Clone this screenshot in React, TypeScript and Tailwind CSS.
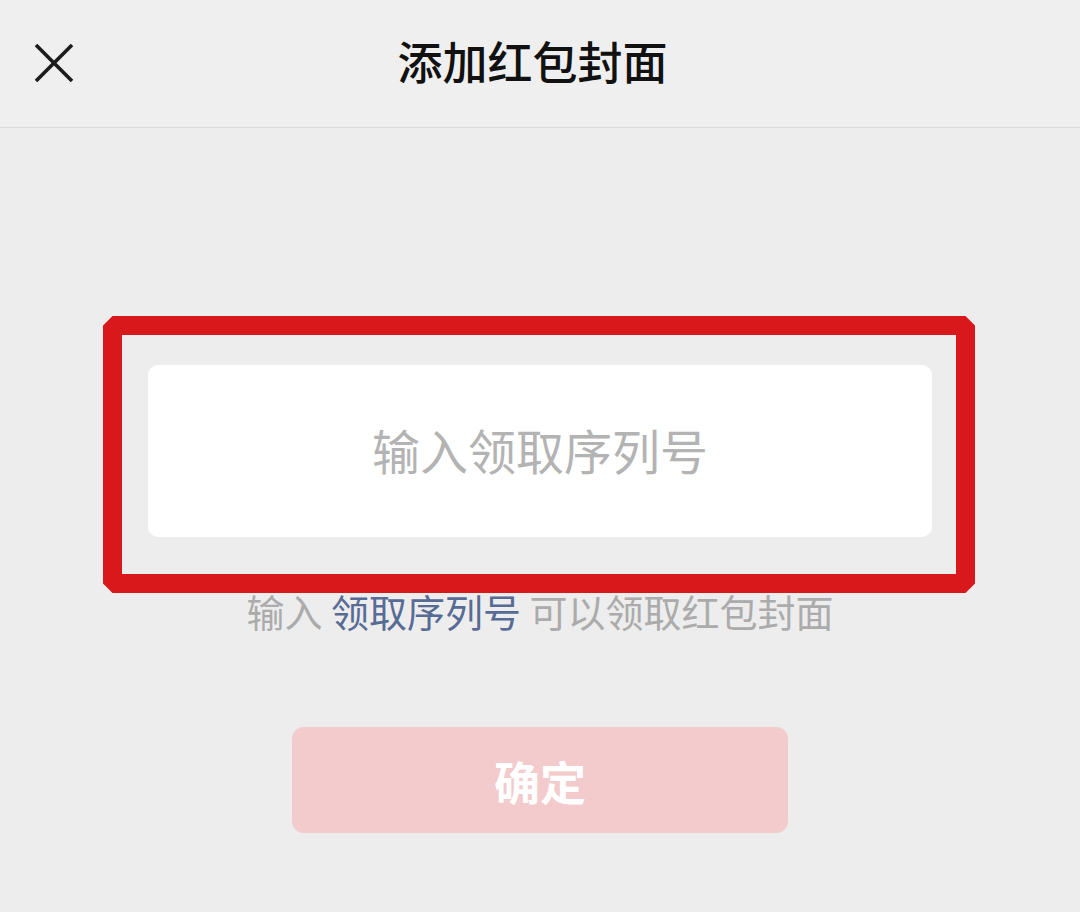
import React from "react";

export default function App() {
  return (
    <div
      className="relative w-[1080px] h-[912px] overflow-hidden bg-[#ededed]"
      style={{ fontFamily: '"Noto Sans CJK SC", "Noto Sans", sans-serif' }}
    >
      {/* Header */}
      <div className="relative flex h-[128px] items-center justify-center border-b border-[#dadada] bg-[#efefef]">
        <button className="absolute left-[34px] top-[44px] flex h-[38px] w-[40px] items-center justify-center">
          <svg width="40" height="38" viewBox="0 0 40 38" fill="none">
            <path d="M2 1 L38 37 M38 1 L2 37" stroke="#1c1c1c" strokeWidth="3.6" strokeLinecap="butt" />
          </svg>
        </button>
        <h1 className="mr-[15px] mb-[6px] text-[45px] font-medium leading-none text-[#111111]">
          添加红包封面
        </h1>
      </div>

      {/* Content */}
      <div className="flex flex-col items-center">
        <div className="mt-[237px] flex h-[172px] w-[784px] items-center justify-center rounded-[10px] bg-white">
          <span className="mb-[4px] text-[48px] leading-none text-[#b3b3b3]">输入领取序列号</span>
        </div>

        <p className="mt-[55px] text-[38px] leading-[38px] text-[#ababab] whitespace-pre">
          输入 <span className="text-[#576b95]">领取序列号</span> 可以领取红包封面
        </p>

        <button className="mt-[97px] flex h-[106px] w-[496px] items-center justify-center rounded-[12px] bg-[#f3cbcc]">
          <span className="text-[46px] font-bold leading-none text-white">确定</span>
        </button>
      </div>

      {/* Red annotation box */}
      <svg
        className="pointer-events-none absolute left-[103px] top-[316px]"
        width="872"
        height="277"
        viewBox="0 0 872 277"
      >
        <rect
          x="9.5"
          y="9.5"
          width="853"
          height="258"
          fill="none"
          stroke="#d9181b"
          strokeWidth="19"
          strokeLinejoin="bevel"
        />
      </svg>
    </div>
  );
}
